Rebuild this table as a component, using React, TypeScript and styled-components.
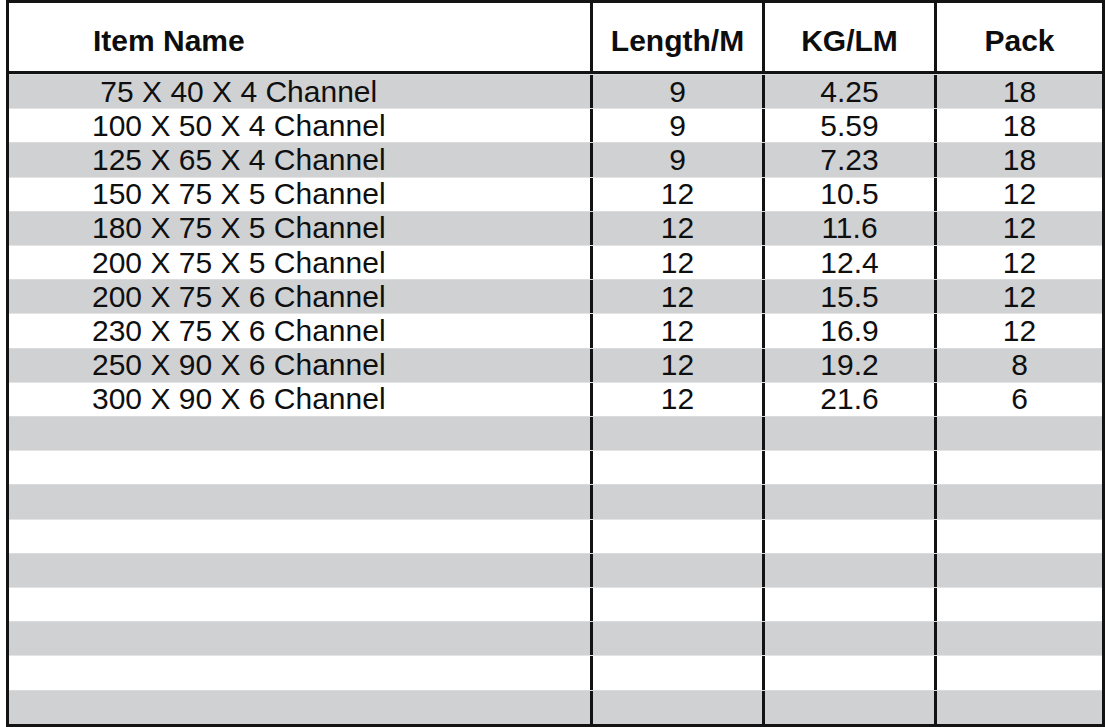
import React from "react";
import styled, { createGlobalStyle } from "styled-components";

const GlobalStyle = createGlobalStyle`
  html, body {
    margin: 0;
    padding: 0;
    background: #ffffff;
  }
  body {
    font-family: "Liberation Sans", Arial, sans-serif;
    color: #111111;
  }
`;

const COLS = "584px 172px 172px 1fr";

const Page = styled.div`
  width: 1108px;
  height: 727px;
  padding-left: 6px;
  box-sizing: border-box;
  display: flex;
`;

const Table = styled.div`
  width: 1099px;
  height: 727px;
  box-sizing: border-box;
  border: 3px solid #131313;
  display: flex;
  flex-direction: column;
  background: #ffffff;
`;

const HeaderRow = styled.div`
  display: grid;
  grid-template-columns: ${COLS};
  height: 71px;
  flex: none;
  border-bottom: 3px solid #131313;
  box-sizing: border-box;
`;

const Body = styled.div`
  flex: 1;
  display: flex;
  flex-direction: column;
`;

const Row = styled.div<{ $shaded: boolean }>`
  flex: 1;
  display: grid;
  grid-template-columns: ${COLS};
  background: ${(p) => (p.$shaded ? "#d0d1d3" : "#ffffff")};
  border-top: 1px solid ${(p) => (p.$shaded ? "#dadbdc" : "#e4e4e4")};
  box-sizing: border-box;
`;

const HeadCell = styled.div<{ $align: "left" | "center"; $last?: boolean }>`
  display: flex;
  align-items: center;
  justify-content: ${(p) => (p.$align === "left" ? "flex-start" : "center")};
  padding-left: ${(p) => (p.$align === "left" ? "84px" : "0")};
  padding-top: 7px;
  border-right: ${(p) => (p.$last ? "none" : "3px solid #131313")};
  font-size: 30px;
  font-weight: 700;
  color: #0d0d0d;
  box-sizing: border-box;
`;

const Cell = styled.div<{ $align: "left" | "center"; $last?: boolean }>`
  display: flex;
  align-items: center;
  justify-content: ${(p) => (p.$align === "left" ? "flex-start" : "center")};
  padding-left: ${(p) => (p.$align === "left" ? "83px" : "0")};
  border-right: ${(p) => (p.$last ? "none" : "3px solid #131313")};
  font-size: 30px;
  font-weight: 400;
  line-height: 1;
  color: #0f0f0f;
  white-space: pre;
  box-sizing: border-box;
`;

type Item = { name: string; length: string; kg: string; pack: string };

const items: Item[] = [
  { name: " 75 X 40 X 4 Channel", length: "9", kg: "4.25", pack: "18" },
  { name: "100 X 50 X 4 Channel", length: "9", kg: "5.59", pack: "18" },
  { name: "125 X 65 X 4 Channel", length: "9", kg: "7.23", pack: "18" },
  { name: "150 X 75 X 5 Channel", length: "12", kg: "10.5", pack: "12" },
  { name: "180 X 75 X 5 Channel", length: "12", kg: "11.6", pack: "12" },
  { name: "200 X 75 X 5 Channel", length: "12", kg: "12.4", pack: "12" },
  { name: "200 X 75 X 6 Channel", length: "12", kg: "15.5", pack: "12" },
  { name: "230 X 75 X 6 Channel", length: "12", kg: "16.9", pack: "12" },
  { name: "250 X 90 X 6 Channel", length: "12", kg: "19.2", pack: "8" },
  { name: "300 X 90 X 6 Channel", length: "12", kg: "21.6", pack: "6" },
];

const TOTAL_ROWS = 19;

export default function App() {
  const rows: (Item | null)[] = Array.from({ length: TOTAL_ROWS }, (_, i) => items[i] ?? null);
  return (
    <>
      <GlobalStyle />
      <Page>
        <Table>
          <HeaderRow>
            <HeadCell $align="left">Item Name</HeadCell>
            <HeadCell $align="center">Length/M</HeadCell>
            <HeadCell $align="center">KG/LM</HeadCell>
            <HeadCell $align="center" $last>
              Pack
            </HeadCell>
          </HeaderRow>
          <Body>
            {rows.map((r, i) => (
              <Row key={i} $shaded={i % 2 === 0}>
                <Cell $align="left">{r ? r.name : ""}</Cell>
                <Cell $align="center">{r ? r.length : ""}</Cell>
                <Cell $align="center">{r ? r.kg : ""}</Cell>
                <Cell $align="center" $last>
                  {r ? r.pack : ""}
                </Cell>
              </Row>
            ))}
          </Body>
        </Table>
      </Page>
    </>
  );
}
